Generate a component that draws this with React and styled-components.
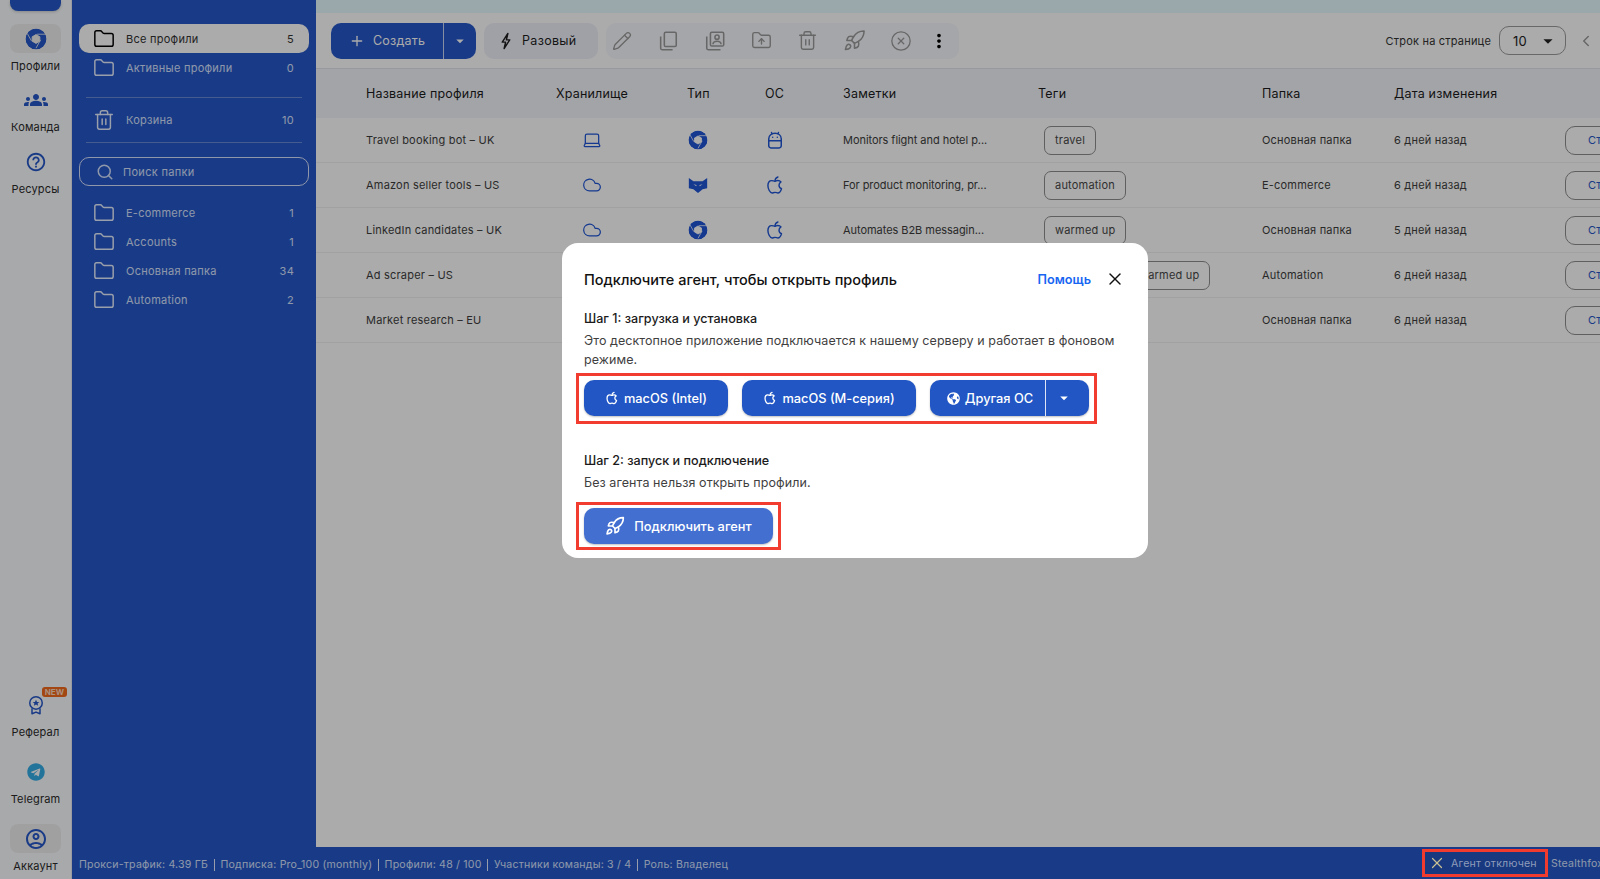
import React, { useId } from 'react';
import styled, { createGlobalStyle } from 'styled-components';
import {
  ChevronLeft, CircleX, Cloud, Folder, FolderUp, Laptop, Pencil, Plus, Rocket, Search, Trash2, X,
} from 'lucide-react';
import { FaGlobeAmericas, FaTelegram } from 'react-icons/fa';
import {
  MdArrowDropDown, MdGroups, MdMoreVert, MdOutlineAccountCircle, MdOutlineHelpOutline,
} from 'react-icons/md';

const GlobalStyle = createGlobalStyle`
  * { box-sizing: border-box; }
  html, body { margin: 0; height: 100%; }
  body { font-family: Inter, "Liberation Sans", sans-serif; color: #3c3c3c; background: #fff; }
`;

const BLUE = '#2657c8';

const BrowserLogo = ({ size = 20 }) => {
  const id = useId();
  return (
    <svg width={size} height={size} viewBox="0 0 24 24">
      <mask id={id}>
        <circle cx="12" cy="12" r="11.5" fill="#fff" />
        <path d="M12 7.200 16.200 9.600V14.400L12 16.800 7.800 14.400V9.600Z" fill="#000" stroke="#000" strokeWidth="1" strokeLinejoin="round" />
        <path d="M13 6.800H23M17 13 12 22M7 14 2.500 6" stroke="#000" strokeWidth="0.9" />
      </mask>
      <circle cx="12" cy="12" r="11.5" fill="currentColor" mask={`url(#${id})`} />
    </svg>
  );
};

const FoxLogo = ({ size = 20 }) => (
  <svg width={size} height={size} viewBox="0 0 24 24" fill="currentColor">
    <path fillRule="evenodd" d="M1 3.500 6.500 7.500H17.500L23 3.500V16L17.500 17 12 21.500 6.500 17 1 16ZM6.500 11 10 13.500 10.200 12.100ZM17.500 11 14 13.500 13.800 12.100Z" />
  </svg>
);

const AndroidIcon = ({ size = 20 }) => (
  <svg width={size} height={size} viewBox="0 0 24 24" fill="none" stroke="currentColor" strokeWidth="1.8" strokeLinecap="round">
    <path d="M4.500 10.500C4.500 6.500 8 4 12 4S19.500 6.500 19.500 10.500V19A2.500 2.500 0 0 1 17 21.500H7A2.500 2.500 0 0 1 4.500 19Z" />
    <path d="M4.500 13H19.500M8.500 4.500 7.800 3M15.500 4.500 16.200 3" />
    <circle cx="9.200" cy="8.800" r="0.900" fill="currentColor" stroke="none" />
    <circle cx="14.800" cy="8.800" r="0.900" fill="currentColor" stroke="none" />
  </svg>
);

const AppleIcon = ({ size = 20, weight = 1.7 }) => (
  <svg width={size} height={size} viewBox="0 0 24 24" fill="none" stroke="currentColor" strokeWidth={weight} strokeLinejoin="round" strokeLinecap="round">
    <path d="M12 7.600C10.500 7.600 9.400 6.700 8 6.700 5.500 6.700 3.500 9 3.500 12.600 3.500 16.700 6.100 21.600 8.500 21.600 9.600 21.600 10.400 20.800 12 20.800S14.300 21.600 15.500 21.600C17.300 21.600 19 18.900 19.800 16.400 17.900 15.600 16.800 14 16.800 12.200 16.800 10.500 17.700 9.200 19.200 8.300 18.200 7 16.700 6.500 15.300 6.500 13.900 6.500 13 7.600 12 7.600Z" />
    <path d="M12 7.600C12 5.100 13.300 3.100 15.500 2.400" />
  </svg>
);

const BoltIcon = ({ size = 18 }) => (
  <svg width={size} height={size} viewBox="0 0 24 24" fill="none" stroke="currentColor" strokeWidth="1.900" strokeLinejoin="round">
    <path d="M14.500 2 7 13.500H11.500L9.500 22 17 10.500H12.500Z" />
  </svg>
);

const ProfileCopyIcon = ({ size = 22 }) => (
  <svg width={size} height={size} viewBox="0 0 24 24" fill="none" stroke="currentColor" strokeWidth="1.7" strokeLinejoin="round">
    <rect x="7" y="2.500" width="14.500" height="15" rx="1.500" />
    <path d="M3 7V20A1.500 1.500 0 0 0 4.500 21.500H18" />
    <circle cx="14.200" cy="7.800" r="2.300" />
    <path d="M9.800 15.500C10 13 12 12.300 14.200 12.300S18.400 13 18.600 15.500" />
  </svg>
);

const CopyOutlineIcon = ({ size = 22 }) => (
  <svg width={size} height={size} viewBox="0 0 24 24" fill="none" stroke="currentColor" strokeWidth="1.7" strokeLinejoin="round">
    <rect x="8" y="2.500" width="13" height="15.500" rx="1.500" />
    <path d="M4 7V20A1.500 1.500 0 0 0 5.500 21.500H17" />
  </svg>
);

const MedalIcon = ({ size = 20 }) => (
  <svg width={size} height={size} viewBox="0 0 24 24" fill="none" stroke="currentColor" strokeWidth="1.8" strokeLinejoin="round">
    <circle cx="12" cy="9.500" r="7.500" />
    <path d="M12 5.600 13.200 8.300 16 8.500 13.900 10.300 14.600 13 12 11.500 9.400 13 10.100 10.300 8 8.500 10.800 8.300Z" fill="currentColor" stroke="none" />
    <path d="M7.200 16V22.500L12 20.500 16.800 22.500V16" />
  </svg>
);

const Shell = styled.div`
  display: flex;
  width: 1600px;
  height: 100vh;
  overflow: hidden;
`;

const Rail = styled.nav`
  width: 72px;
  flex: none;
  display: flex;
  flex-direction: column;
  align-items: center;
  background: #fafcff;
  border-right: 1px solid #e4e8f0;
`;

const RailLogoTab = styled.div`
  width: 51px;
  height: 11px;
  flex: none;
  background: ${BLUE};
  border-radius: 0 0 8px 8px;
  margin-bottom: 13px;
  box-shadow: 0 1px 3px rgba(0, 0, 0, 0.2);
`;

const RailSpacer = styled.div`
  flex: 1;
`;

const RailItem = styled.div`
  display: flex;
  flex-direction: column;
  align-items: center;
  width: 100%;
  margin-bottom: ${(p) => p.$gap || 0}px;
`;

const RailIcon = styled.span`
  position: relative;
  display: flex;
  align-items: center;
  justify-content: center;
  width: 51px;
  height: 29px;
  border-radius: 8px;
  color: ${(p) => p.$color || BLUE};
  background: ${(p) => (p.$active ? '#efefef' : 'transparent')};
`;

const RailLabel = styled.span`
  margin-top: 6px;
  font-size: 11px;
  line-height: 14px;
  letter-spacing: 0.15px;
  color: #2a2a2a;
`;

const NewBadge = styled.span`
  position: absolute;
  top: -3px;
  right: -6px;
  padding: 0 3px;
  height: 10px;
  line-height: 10px;
  font-size: 8px;
  font-weight: 700;
  color: #ffd9c2;
  background: #f26a1b;
  border-radius: 3px;
`;

const Right = styled.div`
  flex: 1;
  min-width: 0;
  display: flex;
  flex-direction: column;
`;

const Body = styled.div`
  flex: 1;
  min-height: 0;
  display: flex;
`;

const Sidebar = styled.aside`
  width: 244px;
  flex: none;
  background: ${BLUE};
  padding: 24px 7px 0;
  display: flex;
  flex-direction: column;
`;

const FolderRow = styled.div`
  display: flex;
  align-items: center;
  height: 29px;
  padding: 0 15px 0 14px;
  border-radius: 10px;
  font-size: 11px;
  letter-spacing: 0.25px;
  color: ${(p) => (p.$active ? '#333' : '#d6e2ff')};
  background: ${(p) => (p.$active ? '#fff' : 'transparent')};
  svg { flex: none; color: ${(p) => (p.$active ? '#000' : '#e6efff')}; }
`;

const FolderName = styled.span`
  flex: 1;
  margin-left: 11px;
`;

const SideDivider = styled.hr`
  border: 0;
  height: 1px;
  margin: ${(p) => p.$top}px 7px ${(p) => p.$bottom}px;
  background: rgba(255, 255, 255, 0.3);
`;

const FolderSearch = styled.div`
  display: flex;
  align-items: center;
  gap: 9px;
  height: 29px;
  padding: 0 16px;
  margin-bottom: 12px;
  border: 1px solid #d6e2ff;
  border-radius: 10px;
  font-size: 11px;
  letter-spacing: 0.3px;
  color: #d6e2ff;
`;

const Main = styled.main`
  flex: 1;
  min-width: 0;
  background: #fff;
  display: flex;
  flex-direction: column;
`;

const TopBand = styled.div`
  height: 13px;
  flex: none;
  background: #e6fbff;
`;

const Toolbar = styled.div`
  height: 55px;
  flex: none;
  display: flex;
  align-items: center;
  padding: 0 0 0 15px;
  gap: 8px;
`;

const SplitButton = styled.div`
  display: flex;
  height: 36px;
  color: #fff;
  background: ${BLUE};
  border-radius: 10px;
  font-size: 12.500px;
  letter-spacing: 0.2px;
`;

const SplitMain = styled.div`
  display: flex;
  align-items: center;
  gap: 8px;
  padding: 0 18px 0 18px;
  border-right: 1px solid rgba(255, 255, 255, 0.75);
`;

const SplitCaret = styled.div`
  display: flex;
  align-items: center;
  justify-content: center;
  width: 32px;
`;

const OneTimeButton = styled.div`
  display: flex;
  align-items: center;
  gap: 7px;
  height: 36px;
  padding: 0 21px 0 13px;
  background: #eff1fa;
  border-radius: 10px;
  font-size: 12.500px;
  letter-spacing: 0.3px;
  color: #1e1e1e;
`;

const ActionGroup = styled.div`
  display: flex;
  align-items: center;
  gap: 22.500px;
  width: 353px;
  height: 36px;
  padding-left: 4px;
  background: #f7f8fc;
  border-radius: 10px;
`;

const ActionIcon = styled.span`
  display: flex;
  align-items: center;
  justify-content: center;
  width: 24px;
  color: ${(p) => (p.$dark ? '#000' : '#9a9a9a')};
  margin-left: ${(p) => (p.$dark ? -8 : 0)}px;
`;

const Pager = styled.div`
  margin-left: auto;
  display: flex;
  align-items: center;
  font-size: 11px;
  letter-spacing: 0.2px;
  color: #333;
  padding-right: 5px;
`;

const PageSelect = styled.div`
  display: flex;
  align-items: center;
  justify-content: space-between;
  width: 67px;
  height: 29px;
  margin: 0 11px 0 8px;
  padding: 0 6px 0 13px;
  border: 1px solid #9b9b9b;
  border-radius: 10px;
  font-size: 13px;
  color: #222;
`;

const Table = styled.section`
  flex: 1;
  min-height: 0;
  overflow: hidden;
`;

const COLUMNS = '190px 131px 78px 78px 195px 224px 132px 171px 100px';

const HeadRow = styled.div`
  display: grid;
  grid-template-columns: ${COLUMNS};
  align-items: center;
  height: 50px;
  padding-left: 50px;
  background: #f3f5fb;
  border-top: 1px solid #e3e5ee;
  font-size: 12.500px;
  letter-spacing: 0.2px;
  color: #1c1c1c;
`;

const Row = styled.div`
  display: grid;
  grid-template-columns: ${COLUMNS};
  align-items: center;
  height: 45px;
  padding-left: 50px;
  border-bottom: 1px solid #f0f0f3;
  font-size: 11px;
  letter-spacing: 0.2px;
  color: #3d3d3d;
`;

const Note = styled.span`
  letter-spacing: -0.05px;
`;

const IconCell = styled.div`
  display: flex;
  color: #1f55d6;
  padding-left: ${(p) => p.$offset || 0}px;
`;

const Tags = styled.div`
  display: flex;
  gap: 4px;
  padding-left: ${(p) => p.$indent}px;
`;

const Tag = styled.span`
  display: inline-flex;
  align-items: center;
  height: 29px;
  padding: 0 10px;
  flex: none;
  border: 1px solid #8e8e8e;
  border-radius: 7px;
  font-size: 11px;
  color: #484848;
  background: #fff;
`;

const StartButton = styled.span`
  display: inline-flex;
  align-items: center;
  width: 90px;
  height: 29px;
  padding-left: 22px;
  border: 1px solid #8e8e8e;
  border-radius: 10px;
  font-size: 11px;
  color: ${BLUE};
`;

const Footer = styled.footer`
  height: 32px;
  flex: none;
  display: flex;
  align-items: center;
  padding-left: 7px;
  background: ${BLUE};
  font-size: 10.600px;
  letter-spacing: 0.2px;
  color: #d5e2ff;
  white-space: nowrap;
`;

const FooterStats = styled.div`
  display: flex;
  align-items: center;
  padding-top: 3px;
`;

const FooterSep = styled.span`
  width: 1px;
  height: 12px;
  margin: 0 5.700px;
  background: #e3ebff;
`;

const AgentStatus = styled.div`
  position: relative;
  z-index: 20;
  display: flex;
  align-items: center;
  gap: 5px;
  height: 28px;
  margin-left: auto;
  padding: 0 5px 0 3px;
  width: 126px;
  border: 3px solid #f03b2e;
  background: #18397f;
  color: #8f9cbb;
  svg { color: #c9c192; flex: none; }
`;

const FooterBrand = styled.span`
  margin-left: 3px;
  width: 49px;
  overflow: hidden;
`;

const Overlay = styled.div`
  position: fixed;
  inset: 0;
  z-index: 10;
  display: flex;
  align-items: flex-start;
  padding: 243px 0 0 562px;
  background: rgba(0, 0, 0, 0.33);
`;

const Modal = styled.div`
  width: 586px;
  height: 315px;
  padding: 25px 22px 0;
  background: #fff;
  border-radius: 16px;
  color: #2c2c2c;
`;

const ModalHead = styled.div`
  display: flex;
  align-items: center;
  height: 22px;
  margin-bottom: 19.500px;
`;

const ModalTitle = styled.h2`
  flex: 1;
  margin: 0;
  font-size: 14.500px;
  font-weight: 500;
  color: #111;
`;

const HelpLink = styled.a`
  font-size: 12.700px;
  font-weight: 600;
  color: #1866f2;
  margin-right: 14px;
`;

const CloseButton = styled.span`
  display: flex;
  color: #111;
  margin-right: 1px;
`;

const StepTitle = styled.h3`
  margin: 0 0 3px;
  font-size: 12.600px;
  line-height: 18px;
  font-weight: 500;
  color: #1b1b1b;
`;

const StepText = styled.p`
  margin: 0;
  font-size: 12.500px;
  line-height: 19.500px;
  color: #3f3f3f;
  letter-spacing: 0.07px;
`;

const Frame = styled.div`
  display: flex;
  width: fit-content;
  gap: ${(p) => p.$gap || 0}px;
  margin: ${(p) => p.$top}px -8px ${(p) => p.$bottom || 0}px -8px;
  padding: ${(p) => p.$pad}px 5px;
  border: 3px solid #f23c30;
`;

const ModalButton = styled.div`
  display: flex;
  align-items: center;
  justify-content: center;
  gap: ${(p) => p.$gap || 5}px;
  width: ${(p) => p.$w}px;
  height: 36px;
  color: #fff;
  font-size: 12.800px;
  font-weight: 500;
  background: ${(p) => (p.$soft ? '#436fd1' : '#2156c4')};
  border-radius: 10px;
  box-shadow: 0 1px 2px rgba(0, 0, 0, 0.25);
`;

const ModalSplit = styled.div`
  display: flex;
  height: 36px;
  color: #fff;
  font-size: 12.800px;
  font-weight: 500;
  background: #2156c4;
  border-radius: 10px;
  box-shadow: 0 1px 2px rgba(0, 0, 0, 0.25);
`;

const ModalSplitMain = styled.div`
  display: flex;
  align-items: center;
  justify-content: center;
  gap: 5px;
  width: 116px;
  padding-left: 5px;
  border-right: 1px solid rgba(255, 255, 255, 0.85);
`;

const ModalSplitCaret = styled.div`
  display: flex;
  align-items: center;
  justify-content: center;
  width: 43px;
  padding-right: 8px;
`;

const folders = [
  { name: 'E-commerce', count: 1 },
  { name: 'Accounts', count: 1 },
  { name: 'Основная папка', count: 34 },
  { name: 'Automation', count: 2 },
];

const toolbarIcons = [
  <Pencil size={20} strokeWidth={1.6} />,
  <CopyOutlineIcon />,
  <ProfileCopyIcon />,
  <FolderUp size={21} strokeWidth={1.6} />,
  <Trash2 size={21} strokeWidth={1.6} />,
  <Rocket size={23} strokeWidth={1.6} />,
  <CircleX size={22} strokeWidth={1.4} />,
];

const columns = ['Название профиля', 'Хранилище', 'Тип', 'ОС', 'Заметки', 'Теги', 'Папка', 'Дата изменения', ''];

const profiles = [
  { name: 'Travel booking bot – UK', storage: 'local', type: 'chrome', os: 'android', note: 'Monitors flight and hotel p...', tags: ['travel'], tagIndent: 6, folder: 'Основная папка', date: '6 дней назад' },
  { name: 'Amazon seller tools – US', storage: 'cloud', type: 'fox', os: 'mac', note: 'For product monitoring, pr...', tags: ['automation'], tagIndent: 6, folder: 'E-commerce', date: '6 дней назад' },
  { name: 'LinkedIn candidates – UK', storage: 'cloud', type: 'chrome', os: 'mac', note: 'Automates B2B messagin...', tags: ['warmed up'], tagIndent: 6, folder: 'Основная папка', date: '5 дней назад' },
  { name: 'Ad scraper – US', storage: 'cloud', type: 'chrome', os: 'mac', note: '', tags: ['warmed up'], tagIndent: 90, folder: 'Automation', date: '6 дней назад' },
  { name: 'Market research – EU', storage: 'cloud', type: 'chrome', os: 'mac', note: '', tags: [], tagIndent: 6, folder: 'Основная папка', date: '6 дней назад' },
];

const ProfileRow = ({ profile }) => (
  <Row>
    <span>{profile.name}</span>
    <IconCell $offset={26}>
      {profile.storage === 'local' ? <Laptop size={20} strokeWidth={1.5} /> : <Cloud size={20} strokeWidth={1.5} />}
    </IconCell>
    <IconCell $offset={1}>{profile.type === 'fox' ? <FoxLogo /> : <BrowserLogo />}</IconCell>
    <IconCell>{profile.os === 'android' ? <AndroidIcon /> : <AppleIcon />}</IconCell>
    <Note>{profile.note}</Note>
    <Tags $indent={profile.tagIndent}>{profile.tags.map((tag) => <Tag key={tag}>{tag}</Tag>)}</Tags>
    <span>{profile.folder}</span>
    <span>{profile.date}</span>
    <span><StartButton>Старт</StartButton></span>
  </Row>
);

export default function App() {
  return (
    <>
      <GlobalStyle />
      <Shell>
        <Rail>
          <RailLogoTab />
          <RailItem $gap={12}>
            <RailIcon $active><BrowserLogo size={22} /></RailIcon>
            <RailLabel>Профили</RailLabel>
          </RailItem>
          <RailItem $gap={13}>
            <RailIcon><MdGroups size={24} /></RailIcon>
            <RailLabel>Команда</RailLabel>
          </RailItem>
          <RailItem>
            <RailIcon><MdOutlineHelpOutline size={22} /></RailIcon>
            <RailLabel>Ресурсы</RailLabel>
          </RailItem>
          <RailSpacer />
          <RailItem $gap={18}>
            <RailIcon><MedalIcon /><NewBadge>NEW</NewBadge></RailIcon>
            <RailLabel>Реферал</RailLabel>
          </RailItem>
          <RailItem $gap={18}>
            <RailIcon $color="#35ade6"><FaTelegram size={18} /></RailIcon>
            <RailLabel>Telegram</RailLabel>
          </RailItem>
          <RailItem $gap={6}>
            <RailIcon $active><MdOutlineAccountCircle size={24} /></RailIcon>
            <RailLabel>Аккаунт</RailLabel>
          </RailItem>
        </Rail>
        <Right>
          <Body>
            <Sidebar>
              <FolderRow $active><Folder size={22} strokeWidth={1.6} /><FolderName>Все профили</FolderName>5</FolderRow>
              <FolderRow><Folder size={22} strokeWidth={1.6} /><FolderName>Активные профили</FolderName>0</FolderRow>
              <SideDivider $top={15} $bottom={7} />
              <FolderRow><Trash2 size={22} strokeWidth={1.6} /><FolderName>Корзина</FolderName>10</FolderRow>
              <SideDivider $top={8} $bottom={14} />
              <FolderSearch><Search size={18} />Поиск папки</FolderSearch>
              {folders.map((folder) => (
                <FolderRow key={folder.name}>
                  <Folder size={22} strokeWidth={1.6} />
                  <FolderName>{folder.name}</FolderName>
                  {folder.count}
                </FolderRow>
              ))}
            </Sidebar>
            <Main>
              <TopBand />
              <Toolbar>
                <SplitButton>
                  <SplitMain><Plus size={16} />Создать</SplitMain>
                  <SplitCaret><MdArrowDropDown size={18} /></SplitCaret>
                </SplitButton>
                <OneTimeButton><BoltIcon />Разовый</OneTimeButton>
                <ActionGroup>
                  {toolbarIcons.map((icon, i) => <ActionIcon key={i}>{icon}</ActionIcon>)}
                  <ActionIcon $dark><MdMoreVert size={22} /></ActionIcon>
                </ActionGroup>
                <Pager>
                  Строк на странице
                  <PageSelect>10<MdArrowDropDown size={22} /></PageSelect>
                  <ChevronLeft size={18} color="#9b9b9b" />
                </Pager>
              </Toolbar>
              <Table>
                <HeadRow>{columns.map((col) => <span key={col}>{col}</span>)}</HeadRow>
                {profiles.map((profile) => <ProfileRow key={profile.name} profile={profile} />)}
              </Table>
            </Main>
          </Body>
          <Footer>
            <FooterStats>
              Прокси-трафик: 4.39 ГБ<FooterSep />Подписка: Pro_100 (monthly)<FooterSep />Профили: 48 / 100<FooterSep />Участники команды: 3 / 4<FooterSep />Роль: Владелец
            </FooterStats>
            <AgentStatus><X size={18} strokeWidth={1.6} />Агент отключен</AgentStatus>
            <FooterBrand>Stealthfox</FooterBrand>
          </Footer>
        </Right>
      </Shell>
      <Overlay>
        <Modal>
          <ModalHead>
            <ModalTitle>Подключите агент, чтобы открыть профиль</ModalTitle>
            <HelpLink>Помощь</HelpLink>
            <CloseButton><X size={20} strokeWidth={1.7} /></CloseButton>
          </ModalHead>
          <StepTitle>Шаг 1: загрузка и установка</StepTitle>
          <StepText>Это десктопное приложение подключается к нашему серверу и работает в фоновом режиме.</StepText>
          <Frame $top={3} $bottom={28} $gap={14} $pad={4.5}>
            <ModalButton $w={144}><AppleIcon size={14} weight={2.2} />macOS (Intel)</ModalButton>
            <ModalButton $w={174}><AppleIcon size={14} weight={2.2} />macOS (М-серия)</ModalButton>
            <ModalSplit>
              <ModalSplitMain><FaGlobeAmericas size={13} />Другая ОС</ModalSplitMain>
              <ModalSplitCaret><MdArrowDropDown size={18} /></ModalSplitCaret>
            </ModalSplit>
          </Frame>
          <StepTitle>Шаг 2: запуск и подключение</StepTitle>
          <StepText>Без агента нельзя открыть профили.</StepText>
          <Frame $top={10} $pad={3}>
            <ModalButton $w={189} $gap={9} $soft><Rocket size={20} strokeWidth={2} />Подключить агент</ModalButton>
          </Frame>
        </Modal>
      </Overlay>
    </>
  );
}
